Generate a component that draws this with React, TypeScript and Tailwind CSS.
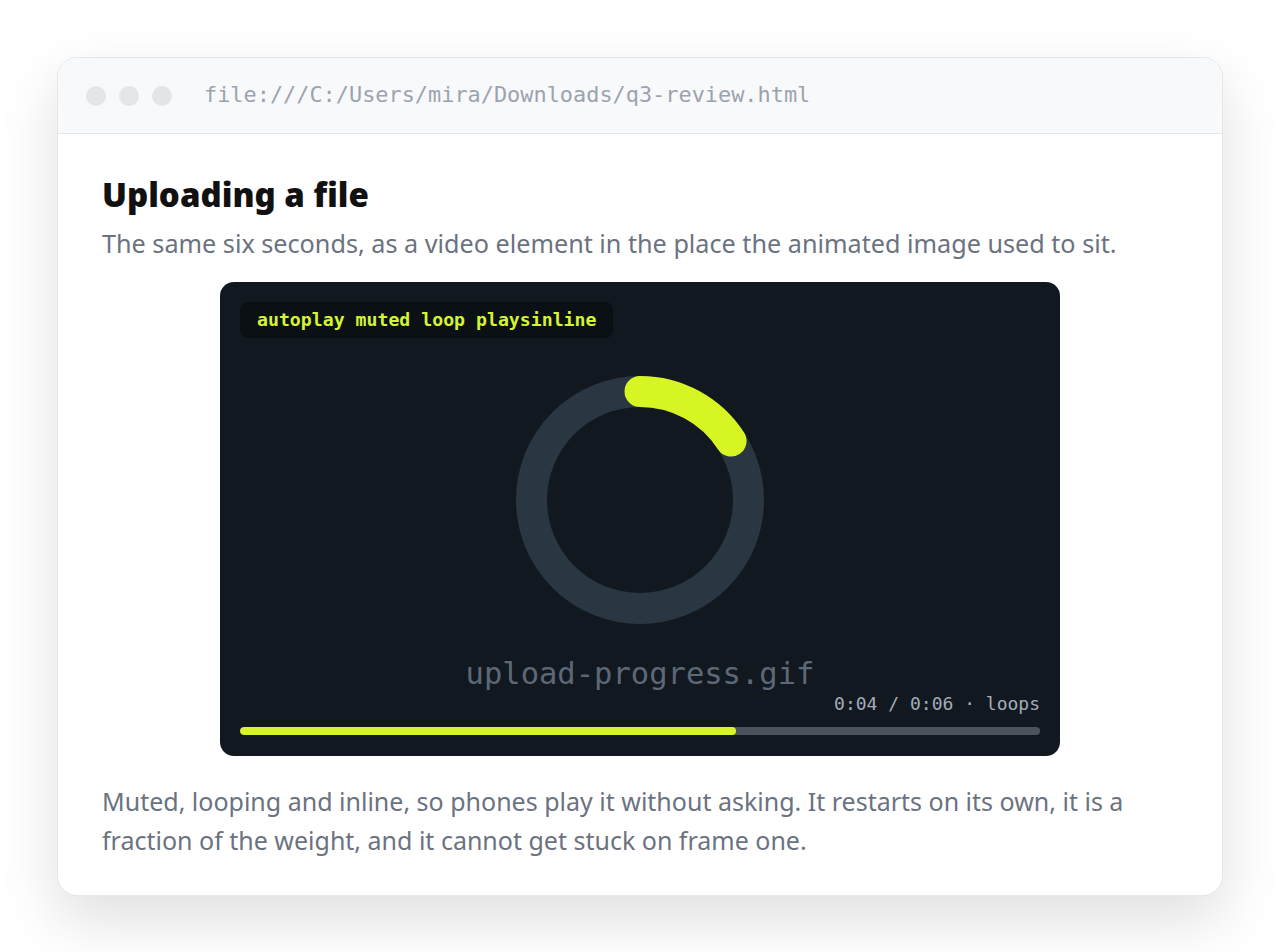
import React from "react";

const sans = { fontFamily: '"Segoe UI", "Noto Sans", "Open Sans", sans-serif' };
const mono = { fontFamily: 'Consolas, "DejaVu Sans Mono", monospace' };

export default function App() {
  const r = 108.5;
  const c = 2 * Math.PI * r;
  const arc = c * (57 / 360);
  return (
    <div className="min-h-[952px] w-full bg-white pt-[57px] pb-[58px]">
      <div className="mx-[57px] overflow-hidden rounded-[20px] border border-[#e5e7eb] bg-white shadow-[0_24px_60px_rgba(0,0,0,0.13)]">
        <div className="flex h-[76px] items-center gap-[13px] border-b border-[#e5e7eb] bg-[#f8f9fa] pl-[28px]">
          <span className="h-[20px] w-[20px] rounded-full bg-[#e3e5e8]" />
          <span className="h-[20px] w-[20px] rounded-full bg-[#e3e5e8]" />
          <span className="h-[20px] w-[20px] rounded-full bg-[#e3e5e8]" />
          <span className="ml-[19px] text-[21.9px] text-[#9ca3af]" style={mono}>
            file:///C:/Users/mira/Downloads/q3-review.html
          </span>
        </div>
        <div className="px-[44px] pt-[41px] pb-[35px]" style={sans}>
          <h1 className="text-[33px] font-black leading-[40px] text-[#111111]">Uploading a file</h1>
          <p className="mt-[10px] text-[25.2px] leading-[36px] text-[#6b7280]">
            The same six seconds, as a video element in the place the animated image used to sit.
          </p>
          <div className="relative mx-auto mt-[21px] flex h-[474px] w-[840px] flex-col rounded-[14px] bg-[#121820] px-[20px] pt-[20px] pb-[20px]">
            <div className="flex">
              <span
                className="rounded-[8px] bg-[#0b1015] px-[17px] py-[5px] text-[18.2px] font-bold leading-[26px] text-[#d4f531]"
                style={mono}
              >
                autoplay muted loop playsinline
              </span>
            </div>
            <div className="flex justify-center pt-[37px]">
              <svg width="250" height="250" viewBox="0 0 250 250">
                <circle cx="125" cy="125" r={r} fill="none" stroke="#2b3643" strokeWidth="31" />
                <circle
                  cx="125"
                  cy="125"
                  r={r}
                  fill="none"
                  stroke="#d6f523"
                  strokeWidth="31"
                  strokeLinecap="round"
                  strokeDasharray={`${arc} ${c}`}
                  transform="rotate(-90 125 125)"
                />
              </svg>
            </div>
            <div className="mt-[30px] text-center text-[30.5px] leading-[38px] text-[#5d6877]" style={mono}>
              upload-progress.gif
            </div>
            <div className="mt-[0px] text-right text-[18px] leading-[22px] text-[#a3adb8]" style={mono}>
              0:04 / 0:06 · loops
            </div>
            <div className="mt-[12px] h-[8px] w-full overflow-hidden rounded-full bg-[#4b525b]">
              <div className="h-full rounded-full bg-[#d6f523]" style={{ width: "62%" }} />
            </div>
          </div>
          <p className="mt-[26px] text-[25px] leading-[39px] text-[#6b7280]">
            Muted, looping and inline, so phones play it without asking. It restarts on its own, it is a
            fraction of the weight, and it cannot get stuck on frame one.
          </p>
        </div>
      </div>
    </div>
  );
}
